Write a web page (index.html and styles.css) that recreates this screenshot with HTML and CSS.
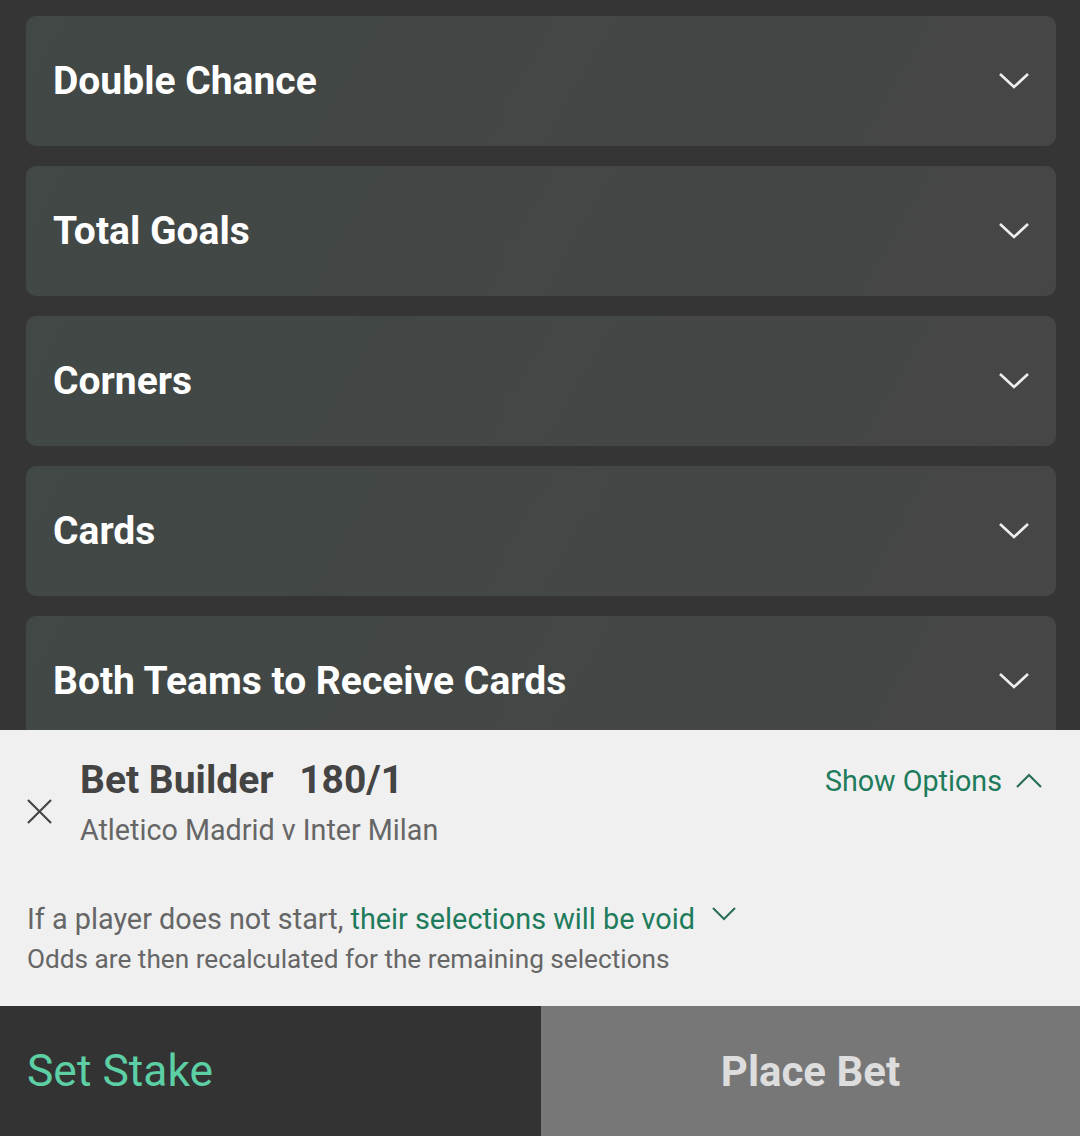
FILE: index.html
```html
<!DOCTYPE html>
<html lang="en">
<head>
    <meta charset="UTF-8">
    <meta name="viewport" content="width=device-width, initial-scale=1.0">
    <title>Bet Builder</title>
    <link rel="stylesheet" href="styles.css">
</head>
<body>
    <div class="app">
        <div class="market-list">
            <div class="market-card">
                <h3 class="market-title">Double Chance</h3>
                <svg class="chevron" viewBox="0 0 32 18"><path d="M2 2 L16 15 L30 2"/></svg>
            </div>
            <div class="market-card">
                <h3 class="market-title">Total Goals</h3>
                <svg class="chevron" viewBox="0 0 32 18"><path d="M2 2 L16 15 L30 2"/></svg>
            </div>
            <div class="market-card">
                <h3 class="market-title">Corners</h3>
                <svg class="chevron" viewBox="0 0 32 18"><path d="M2 2 L16 15 L30 2"/></svg>
            </div>
            <div class="market-card">
                <h3 class="market-title">Cards</h3>
                <svg class="chevron" viewBox="0 0 32 18"><path d="M2 2 L16 15 L30 2"/></svg>
            </div>
            <div class="market-card">
                <h3 class="market-title">Both Teams to Receive Cards</h3>
                <svg class="chevron" viewBox="0 0 32 18"><path d="M2 2 L16 15 L30 2"/></svg>
            </div>
        </div>

        <!-- betslip -->
        <div class="betslip">
            <div class="slip-head">
                <svg class="close-icon" viewBox="0 0 26 26"><path d="M1 1 L25 25 M25 1 L1 25"/></svg>
                <div class="slip-info">
                    <div class="slip-title">Bet Builder <span class="slip-odds">180/1</span></div>
                    <div class="slip-event">Atletico Madrid v Inter Milan</div>
                </div>
                <a class="show-options">Show Options
                    <svg class="chevron-up" viewBox="0 0 26 16"><path d="M1 14 L13 2 L25 14"/></svg>
                </a>
            </div>
            <div class="void-note">
                <p class="void-line">If a player does not start, <span class="void-link">their selections will be void</span>
                    <svg class="chevron-small" viewBox="0 0 24 14"><path d="M1 1 L12 12 L23 1"/></svg>
                </p>
                <p class="void-sub">Odds are then recalculated for the remaining selections</p>
            </div>
        </div>

        <div class="action-bar">
            <button class="btn-stake">Set Stake</button>
            <button class="btn-place">Place Bet</button>
        </div>
    </div>
</body>
</html>
```

FILE: styles.css
```css
* {
    margin: 0;
    padding: 0;
    box-sizing: border-box;
}

html, body {
    width: 100%;
    height: 100%;
    overflow: hidden;
}

body {
    font-family: Roboto, 'Noto Sans', sans-serif;
    background: #353535;
}

.app {
    height: 1136px;
    display: flex;
    flex-direction: column;
}

.market-list {
    flex: 1;
    overflow: hidden;
    padding: 16px 24px 0 26px;
    display: flex;
    flex-direction: column;
    gap: 20px;
}

.market-card {
    flex: 0 0 130px;
    background: linear-gradient(120deg, #414845 0%, #434745 50%, #464646 100%);
    border-radius: 10px;
    display: flex;
    align-items: center;
    justify-content: space-between;
    padding: 0 26px 0 27px;
}

.market-title {
    font-size: 39px;
    font-weight: 700;
    color: #ffffff;
}

.chevron {
    width: 32px;
    height: 18px;
    fill: none;
    stroke: #eeeeee;
    stroke-width: 2.6;
}

/* betslip */
.betslip {
    flex: 0 0 276px;
    background: #f0f0f0;
    padding: 0 27px;
}

.slip-head {
    display: flex;
    align-items: flex-start;
    padding-top: 30px;
}

.close-icon {
    width: 25px;
    height: 25px;
    margin-top: 39px;
    margin-right: 28px;
    fill: none;
    stroke: #444;
    stroke-width: 2.2;
}

.slip-info {
    flex: 1;
}

.slip-title {
    font-size: 39px;
    font-weight: 700;
    color: #444444;
    line-height: 40px;
}

.slip-odds {
    margin-left: 16px;
}

.slip-event {
    font-size: 28.7px;
    color: #666666;
    margin-top: 13px;
}

.show-options {
    display: flex;
    align-items: center;
    gap: 14px;
    font-size: 28.7px;
    color: #1e7b5b;
    margin-top: 4px;
    margin-right: 11px;
}

.chevron-up {
    width: 26px;
    height: 16px;
    fill: none;
    stroke: #2a6e57;
    stroke-width: 2.2;
}

.void-note {
    padding-top: 54px;
}

.void-line {
    font-size: 28.8px;
    color: #666666;
    line-height: 36px;
}

.void-link {
    color: #1e7b5b;
}

.chevron-small {
    width: 24px;
    height: 14px;
    margin-left: 10px;
    vertical-align: 8px;
    fill: none;
    stroke: #2a6e57;
    stroke-width: 2;
}

.void-sub {
    font-size: 26.2px;
    color: #666666;
    line-height: 34px;
    margin-top: 5px;
}

/* bottom buttons */
.action-bar {
    flex: 0 0 130px;
    display: grid;
    grid-template-columns: 541px 1fr;
}

.action-bar button {
    border: none;
    font-family: Roboto, 'Noto Sans', sans-serif;
}

.btn-stake {
    background: #333333;
    color: #5ccfa5;
    font-size: 44.4px;
    text-align: left;
    padding-left: 27px;
}

.btn-place {
    background: #777777;
    color: #dddddd;
    font-size: 42px;
    font-weight: 700;
}
```
